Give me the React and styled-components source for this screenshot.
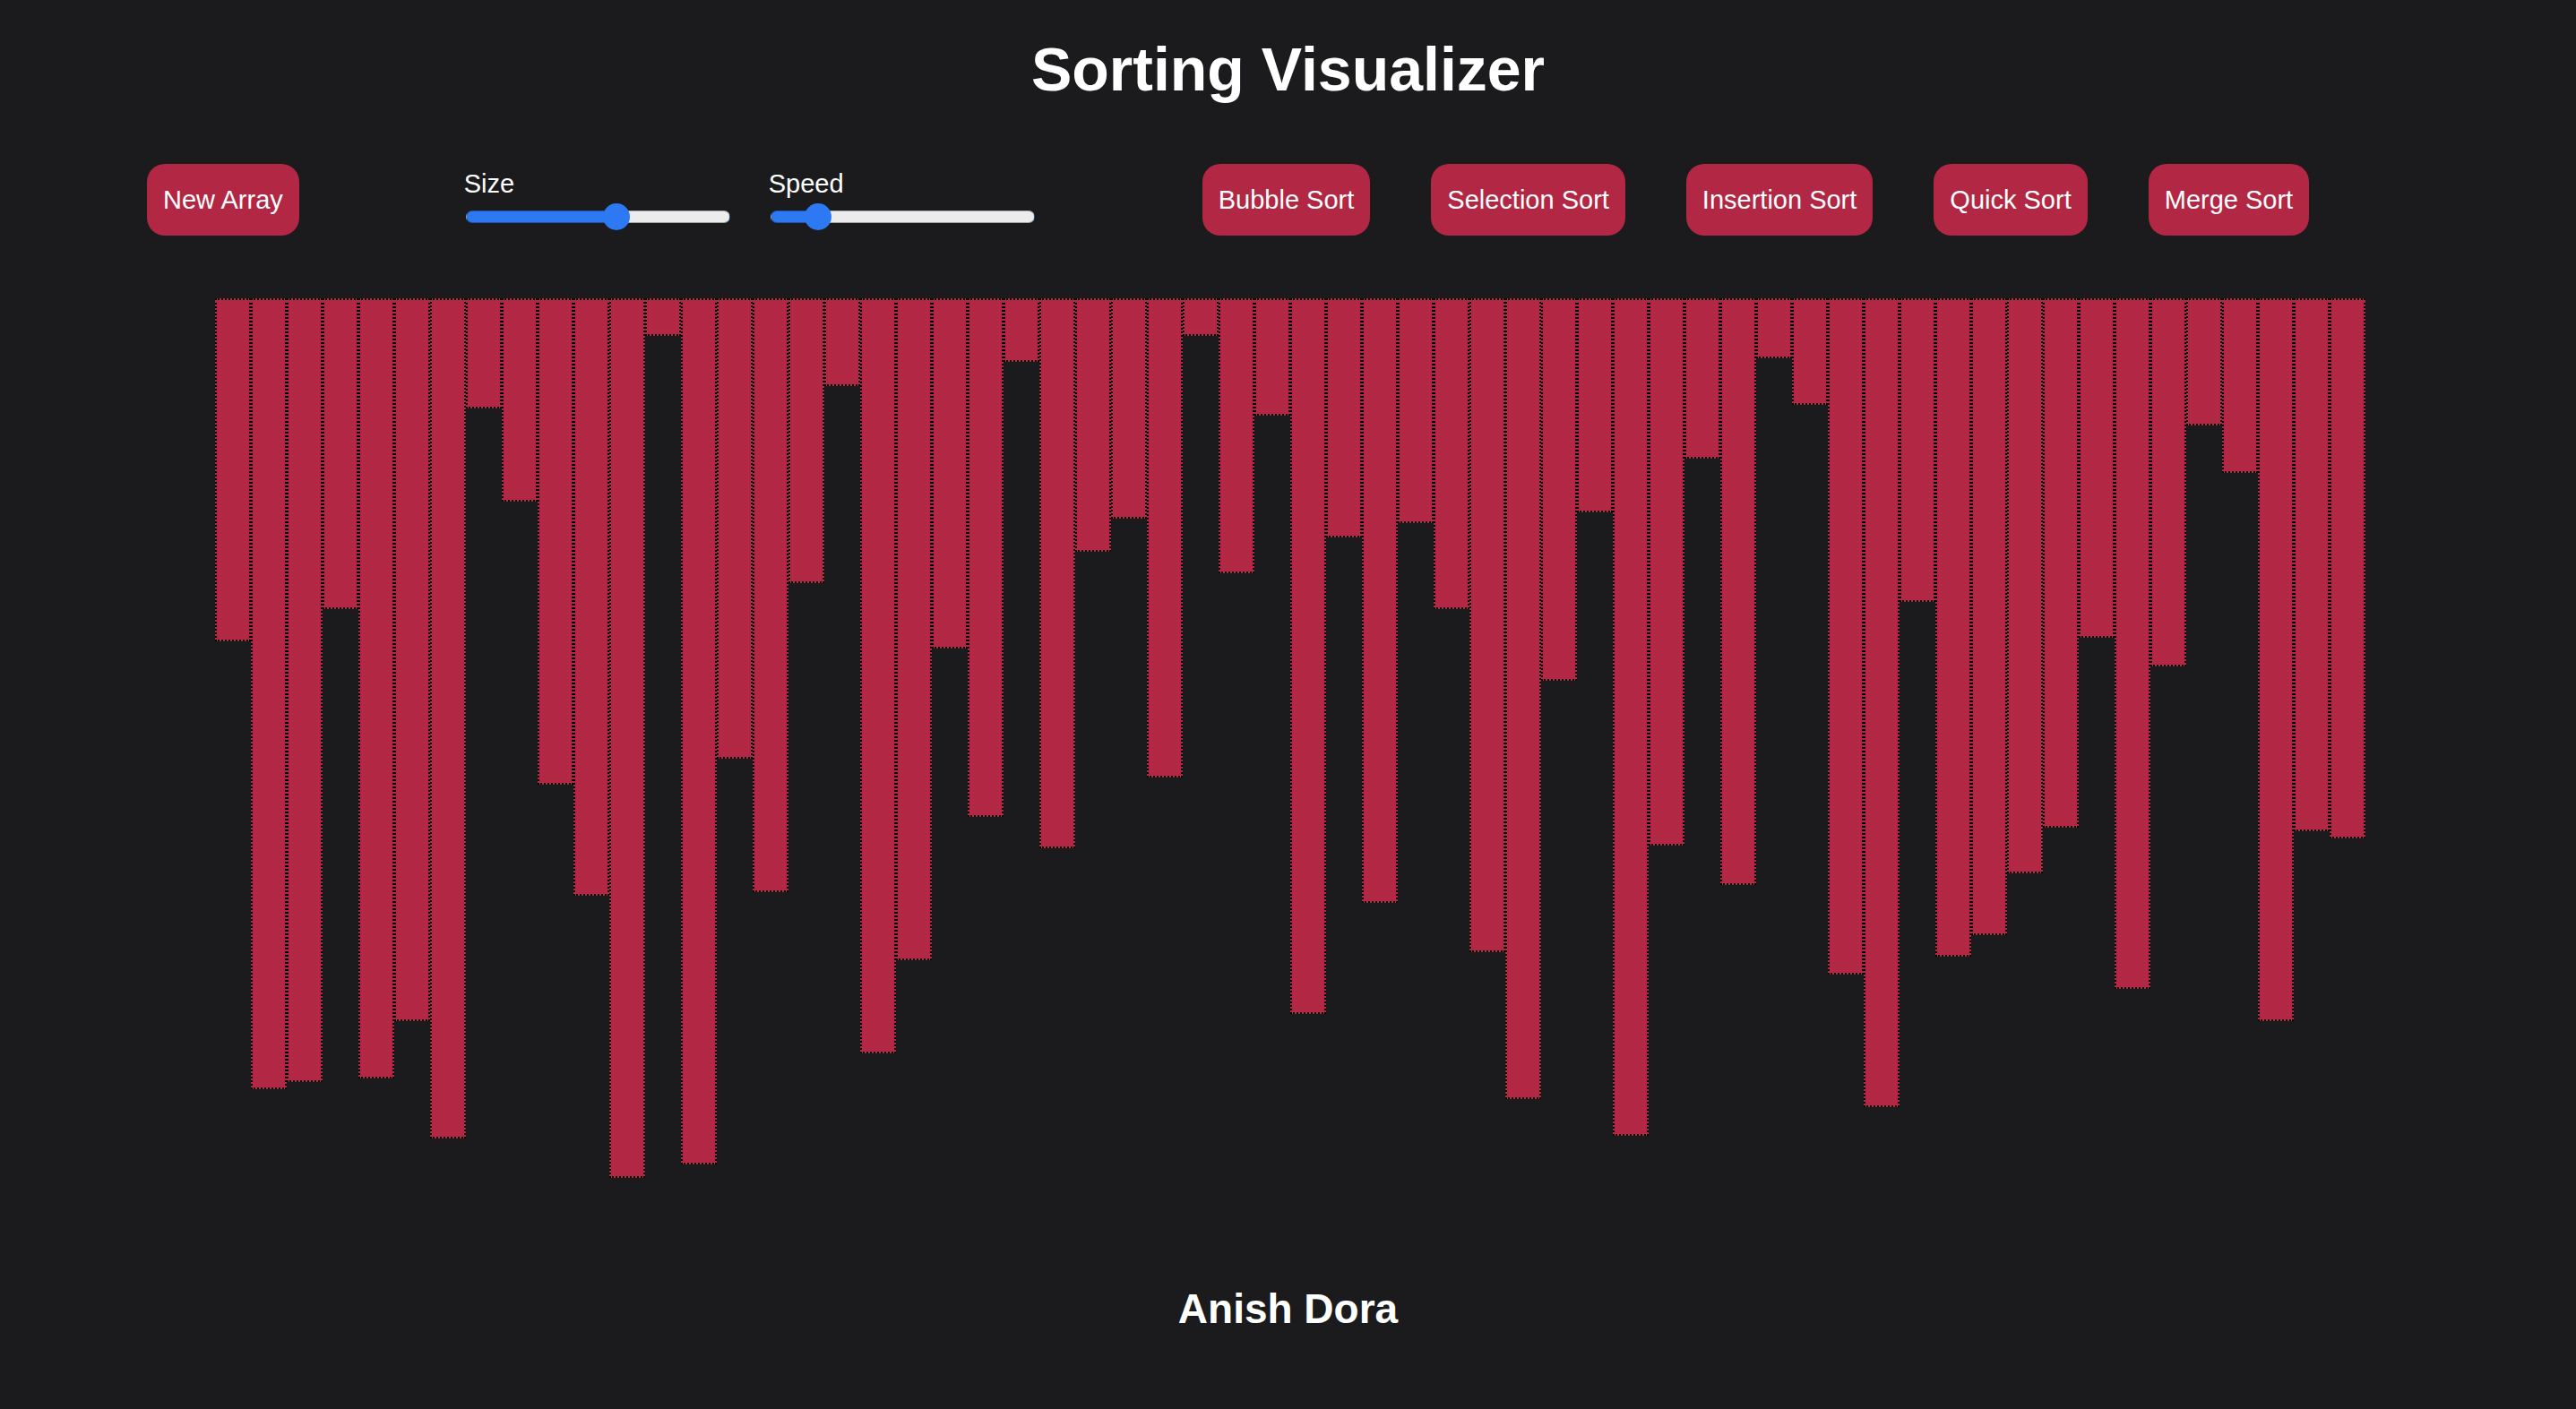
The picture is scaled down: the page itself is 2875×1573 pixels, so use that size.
import React, { useState } from 'react'
import styled, { createGlobalStyle } from 'styled-components'

const colors = {
  bg: '#1b1b1d',
  bar: '#b22743',
  text: '#ffffff',
  blue: '#2d79f3',
  track: '#ececec',
}

const heights = [
  383, 883, 875, 347, 871, 807, 938, 123, 227, 543,
  667, 982, 42, 967, 514, 663, 318, 98, 843, 739,
  391, 579, 71, 614, 283, 246, 535, 42, 307, 131,
  799, 267, 675, 251, 347, 730, 894, 427, 239, 935,
  611, 179, 655, 67, 119, 755, 903, 339, 735, 711,
  642, 591, 379, 771, 411, 142, 195, 807, 595, 603,
]

const algorithms = ['Bubble Sort', 'Selection Sort', 'Insertion Sort', 'Quick Sort', 'Merge Sort']

const Slider = ({ label, min, max, initial }) => {
  const [value, setValue] = useState(initial)
  const p = (value - min) / (max - min)
  // fill stops under the thumb centre (thumb 30px, track 295px)
  const pct = ((15 + p * 265) / 295) * 100
  return (
    <SliderField>
      {label}
      <Range min={min} max={max} value={value} $pct={pct} onChange={e => setValue(+e.target.value)} />
    </SliderField>
  )
}

export default function App() {
  return (
    <Page>
      <GlobalStyle />
      <Title>Sorting Visualizer</Title>
      <Toolbar>
        <Button>New Array</Button>
        <Sliders>
          <Slider label="Size" min={5} max={100} initial={60} />
          <Slider label="Speed" min={1} max={100} initial={15} />
        </Sliders>
        <SortButtons>
          {algorithms.map(name => <Button key={name}>{name}</Button>)}
        </SortButtons>
      </Toolbar>
      <Chart>
        {heights.map((h, i) => <Bar key={i} style={{ height: h }} />)}
      </Chart>
      <Footer>Anish Dora</Footer>
    </Page>
  )
}

/* STYLES */
const GlobalStyle = createGlobalStyle`
  html, body {
    margin: 0;
    padding: 0;
    background: ${colors.bg};
  }
  body {
    font-family: "Liberation Sans", Arial, Helvetica, sans-serif;
    color: ${colors.text};
  }
`

const Page = styled.div`
  display: flex;
  flex-direction: column;
  min-height: 1573px;
`

const Title = styled.h1`
  margin: 37px 0 0;
  text-align: center;
  font-size: 68px;
  line-height: 80px;
  font-weight: 700;
`

const Toolbar = styled.div`
  display: flex;
  align-items: center;
  height: 80px;
  margin-top: 66px;
  padding-left: 164px;
`

const Button = styled.button`
  flex: none;
  height: 80px;
  padding: 0 18px;
  border: none;
  border-radius: 20px;
  background: ${colors.bar};
  color: ${colors.text};
  font-family: inherit;
  font-size: 29px;
  cursor: pointer;
`

const Sliders = styled.div`
  display: flex;
  gap: 43px;
  margin: 0 187px 0 184px;
`

const SliderField = styled.label`
  display: flex;
  flex-direction: column;
  gap: 5px;
  font-size: 29px;
  line-height: 33px;
`

const Range = styled.input.attrs({ type: 'range' })`
  -webkit-appearance: none;
  appearance: none;
  width: 295px;
  height: 30px;
  margin: 0 0 0 2px;
  background: transparent;
  &::-webkit-slider-runnable-track {
    height: 14px;
    box-sizing: border-box;
    border-radius: 7px;
    border: 1.5px solid rgba(0, 0, 0, 0.3);
    background: linear-gradient(to right, ${colors.blue} ${p => p.$pct}%, ${colors.track} ${p => p.$pct}%);
  }
  &::-webkit-slider-thumb {
    -webkit-appearance: none;
    width: 30px;
    height: 30px;
    border: none;
    border-radius: 50%;
    background: ${colors.blue};
    margin-top: -9.5px;
  }
`

const SortButtons = styled.div`
  display: flex;
  gap: 68px;
`

const Chart = styled.div`
  display: flex;
  justify-content: center;
  align-items: flex-start;
  height: 1000px;
  margin-top: 70px;
  padding-left: 5px;
`

const Bar = styled.div`
  flex: none;
  width: 40px;
  box-sizing: border-box;
  border: 2px dotted #000;
  background: ${colors.bar};
`

const Footer = styled.h2`
  margin: 102px 0 0;
  text-align: center;
  font-size: 46px;
  line-height: 53px;
  font-weight: 700;
`
